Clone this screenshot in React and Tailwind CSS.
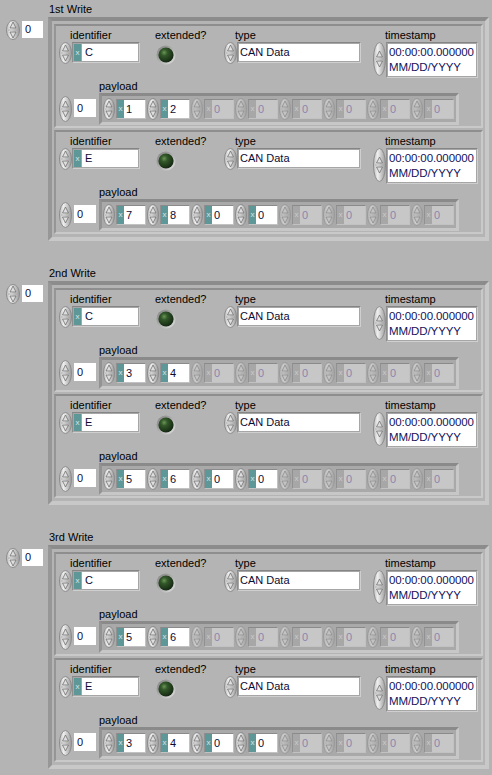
import React from "react";

const SECTIONS = [
  { label: "1st Write", clusters: [{ id: "C", payload: ["1", "2"] }, { id: "E", payload: ["7", "8", "0", "0"] }] },
  { label: "2nd Write", clusters: [{ id: "C", payload: ["3", "4"] }, { id: "E", payload: ["5", "6", "0", "0"] }] },
  { label: "3rd Write", clusters: [{ id: "C", payload: ["5", "6"] }, { id: "E", payload: ["3", "4", "0", "0"] }] },
];

function Spinner({ w = 13, h = 22, dim = false }) {
  const cx = w / 2;
  const cy = h / 2;
  return (
    <svg width={w} height={h} viewBox={`0 0 ${w} ${h}`} className={dim ? "shrink-0 opacity-50" : "shrink-0"}>
      <defs>
        <linearGradient id="spg" x1="0" y1="0" x2="1" y2="0">
          <stop offset="0" stopColor="#bdbdbd" />
          <stop offset="0.35" stopColor="#efefef" />
          <stop offset="1" stopColor="#9a9a9a" />
        </linearGradient>
      </defs>
      <ellipse cx={cx} cy={cy} rx={cx - 0.5} ry={cy - 0.5} fill="url(#spg)" stroke="#8c8c8c" strokeWidth="1" />
      <line x1={2} y1={cy} x2={w - 2} y2={cy} stroke="#a3a3a3" strokeWidth="0.8" />
      <path d={`M${cx} ${cy - 8} L${cx - 3} ${cy - 2} L${cx + 3} ${cy - 2} Z`} fill="#dedede" stroke="#6e6e6e" strokeWidth="0.8" />
      <path d={`M${cx} ${cy + 8} L${cx - 3} ${cy + 2} L${cx + 3} ${cy + 2} Z`} fill="#dedede" stroke="#6e6e6e" strokeWidth="0.8" />
    </svg>
  );
}

function Led() {
  return (
    <svg width="20" height="20" viewBox="0 0 20 20" className="shrink-0">
      <defs>
        <linearGradient id="ledring" x1="0" y1="0" x2="1" y2="1">
          <stop offset="0" stopColor="#7c7c7c" />
          <stop offset="1" stopColor="#e2e2e2" />
        </linearGradient>
        <radialGradient id="ledg" cx="0.38" cy="0.34" r="0.7">
          <stop offset="0" stopColor="#6a9656" />
          <stop offset="0.3" stopColor="#33582a" />
          <stop offset="1" stopColor="#122410" />
        </radialGradient>
      </defs>
      <circle cx="10" cy="10" r="9.5" fill="url(#ledring)" />
      <circle cx="10" cy="10" r="7.6" fill="url(#ledg)" />
    </svg>
  );
}

function PayloadElement({ value, active }) {
  return (
    <div className="flex w-[43px] shrink-0 items-center gap-px">
      <Spinner w={12} h={22} dim={!active} />
      <div className="flex h-[20px] w-[30px] border border-t-[#8a8a8a] border-l-[#919191] border-r-[#c2c2c2] border-b-[#c2c2c2] bg-[#a7a7a7]">
        {active ? (
          <>
            <div className="flex w-[7px] items-center justify-center bg-[#5e9797] text-[8px] leading-none text-[#d6e6e6]">x</div>
            <div className="flex-1 bg-white pl-[2px] text-[11px] leading-[18px] text-[#0b0b35]">{value}</div>
          </>
        ) : (
          <>
            <div className="flex w-[7px] items-center justify-center text-[8px] leading-none text-[#cbcbcb]">x</div>
            <div className="flex-1 bg-[#c7c7c7] pl-[2px] text-[11px] leading-[18px] text-[#8c84ad]">0</div>
          </>
        )}
      </div>
    </div>
  );
}

function Cluster({ id, payload }) {
  const items = Array.from({ length: 8 }, (_, i) => ({ v: payload[i], active: i < payload.length }));
  return (
    <div className="h-[104px] w-[429px] border-2 border-t-[#8e8e8e] border-l-[#969696] border-r-[#c9c9c9] border-b-[#c9c9c9]">
      <div className="flex pt-[3px]">
        <div className="ml-[3px] flex w-[96px] flex-col">
          <div className="ml-[11px] h-[13px]">identifier</div>
          <div className="flex items-start">
            <Spinner w={13} h={22} />
            <div className="flex h-[21px] w-[68px] border border-t-[#858585] border-l-[#8e8e8e] border-r-[#cfcfcf] border-b-[#cfcfcf] bg-[#a6a6a6] p-px">
              <div className="flex w-[7px] items-center justify-center bg-[#5e9797] text-[8px] leading-none text-[#d6e6e6]">x</div>
              <div className="ml-px flex-1 bg-white pl-[3px] text-[11px] leading-[17px] text-[#0b0b35]">{id}</div>
            </div>
          </div>
        </div>
        <div className="flex w-[69px] flex-col">
          <div className="h-[13px]">extended?</div>
          <div className="ml-px mt-[3px]">
            <Led />
          </div>
        </div>
        <div className="flex w-[149px] flex-col">
          <div className="ml-[11px] h-[13px]">type</div>
          <div className="flex items-start">
            <Spinner w={13} h={22} />
            <div className="h-[21px] w-[124px] border border-t-[#858585] border-l-[#8e8e8e] border-r-[#cfcfcf] border-b-[#cfcfcf] bg-[#a6a6a6] p-px">
              <div className="h-full bg-white pl-[1px] text-[11px] leading-[17px] text-[#0b0b35]">CAN Data</div>
            </div>
          </div>
        </div>
        <div className="flex flex-col">
          <div className="ml-[12px] h-[13px]">timestamp</div>
          <div className="flex items-start">
            <Spinner w={13} h={34} />
            <div className="h-[36px] w-[92px] border border-t-[#858585] border-l-[#8e8e8e] border-r-[#cfcfcf] border-b-[#cfcfcf] bg-[#a6a6a6] p-px">
              <div className="h-full bg-white pl-[1px] pt-[1px] text-[11.5px] leading-[15px] tracking-[-0.1px] text-[#12125c]">
                <div>00:00:00.000000</div>
                <div>MM/DD/YYYY</div>
              </div>
            </div>
          </div>
        </div>
      </div>
      <div className="mt-[2px] flex">
        <div className="ml-[3px] mt-[16px] flex items-start">
          <Spinner w={13} h={26} />
          <div className="ml-[2px] mt-[3px] h-[18px] w-[22px] bg-white pl-[3px] text-[11px] leading-[18px] text-[#0b0b35]">0</div>
        </div>
        <div className="ml-[3px] flex flex-col">
          <div className="h-[13px]">payload</div>
          <div className="h-[32px] w-[360px] border-[3px] border-t-[#8a8a8a] border-l-[#939393] border-r-[#c7c7c7] border-b-[#c7c7c7] bg-[#a9a9a9] pl-px pt-[2px]">
            <div className="flex gap-px">
              {items.map((it, i) => (
                <PayloadElement key={i} value={it.v} active={it.active} />
              ))}
            </div>
          </div>
        </div>
      </div>
    </div>
  );
}

function Section({ label, clusters }) {
  return (
    <div className="flex">
      <div className="flex w-[48px] shrink-0 items-start pl-[6px] pt-[20px]">
        <Spinner w={14} h={20} />
        <div className="ml-[2px] mt-[1px] h-[17px] w-[21px] bg-white pl-[3px] text-[11px] leading-[17px] text-[#0b0b35]">0</div>
      </div>
      <div className="flex flex-col pt-[3px]">
        <div className="ml-px h-[12px] leading-[12px]">{label}</div>
        <div className="mt-[2px] flex h-[224px] w-[441px] flex-col gap-[2px] border-4 border-t-[#8c8c8c] border-l-[#979797] border-r-[#c8c8c8] border-b-[#c8c8c8] pl-[2px] pt-[3px]">
          {clusters.map((c, i) => (
            <Cluster key={i} id={c.id} payload={c.payload} />
          ))}
        </div>
      </div>
    </div>
  );
}

export default function App() {
  return (
    <div className="h-[775px] w-[492px] overflow-hidden bg-[#b4b4b4] font-['Liberation_Sans',Arial,sans-serif] text-[11px] leading-[13px] text-black">
      <div className="flex flex-col gap-[23px]">
        {SECTIONS.map((s, i) => (
          <Section key={i} label={s.label} clusters={s.clusters} />
        ))}
      </div>
    </div>
  );
}
